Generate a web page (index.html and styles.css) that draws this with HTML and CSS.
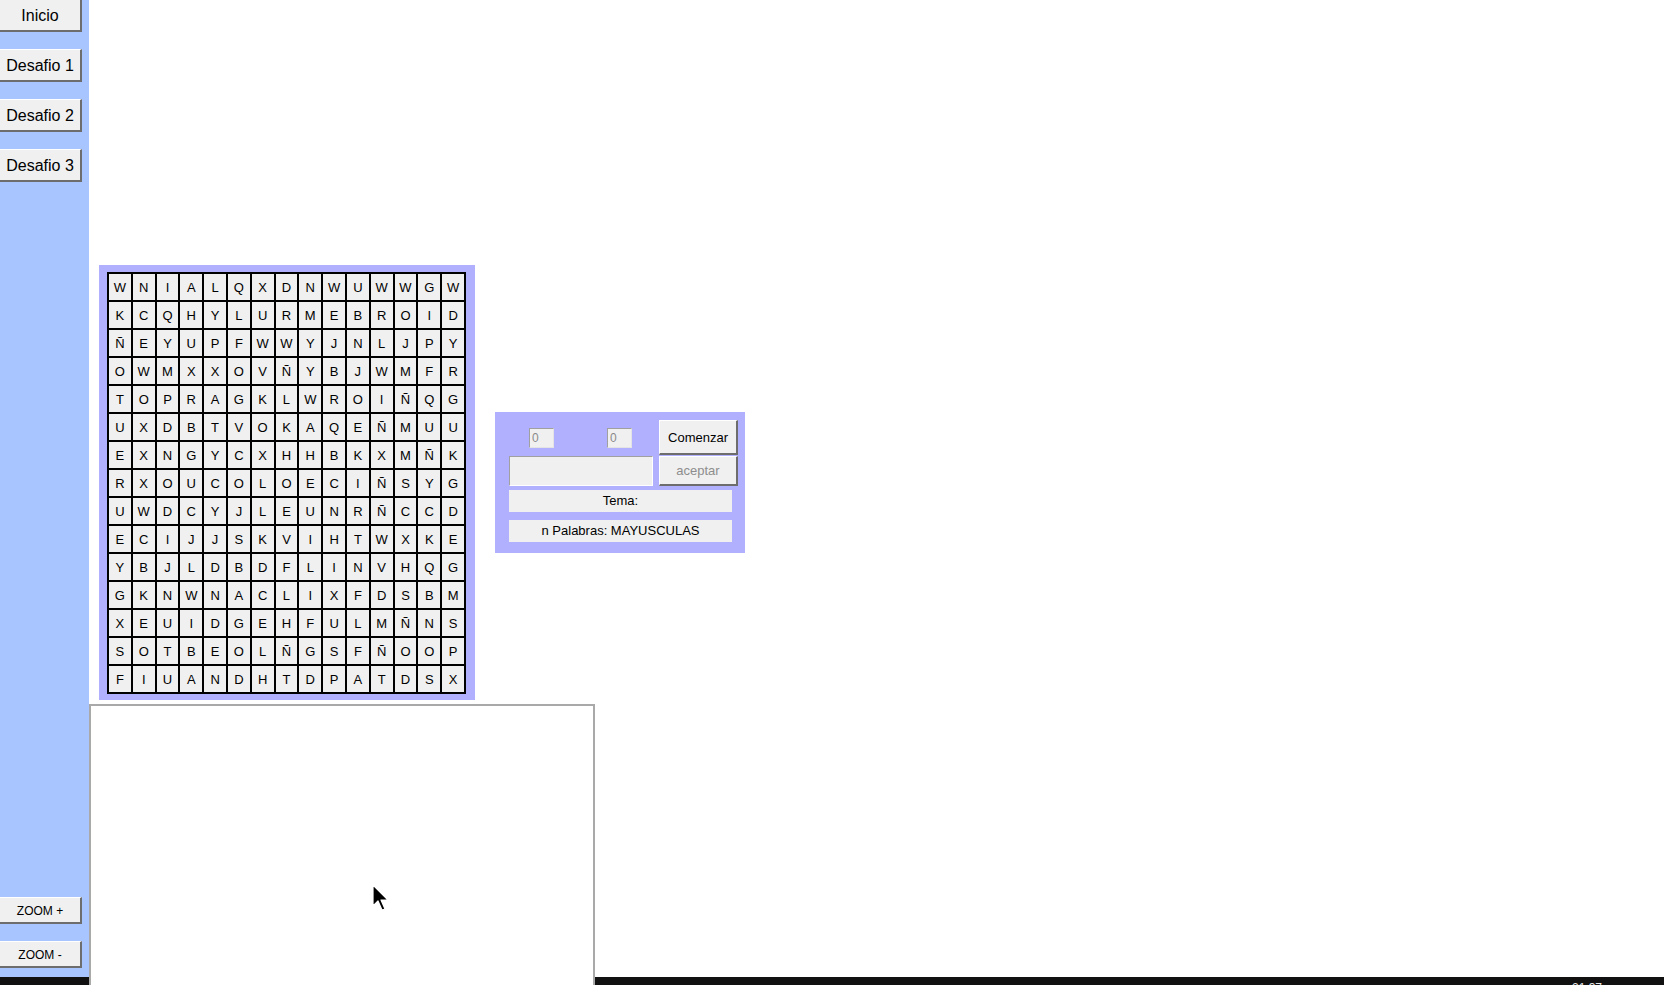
FILE: index.html
```html
<!DOCTYPE html>
<html lang="es">
<head>
<meta charset="utf-8">
<title>Sopa de letras</title>
<link rel="stylesheet" href="styles.css">
</head>
<body>
<div class="app">
  <nav class="sidebar">
    <div class="nav-top">
      <button class="nav-btn first">Inicio</button>
      <button class="nav-btn">Desafio 1</button>
      <button class="nav-btn">Desafio 2</button>
      <button class="nav-btn">Desafio 3</button>
    </div>
    <div class="nav-bottom">
      <button class="zoom-btn">ZOOM +</button>
      <button class="zoom-btn">ZOOM -</button>
    </div>
  </nav>
  <main class="main">
    <div class="row">
      <div class="board">
        <table class="grid">
          <tr><td>W</td><td>N</td><td>I</td><td>A</td><td>L</td><td>Q</td><td>X</td><td>D</td><td>N</td><td>W</td><td>U</td><td>W</td><td>W</td><td>G</td><td>W</td></tr>
          <tr><td>K</td><td>C</td><td>Q</td><td>H</td><td>Y</td><td>L</td><td>U</td><td>R</td><td>M</td><td>E</td><td>B</td><td>R</td><td>O</td><td>I</td><td>D</td></tr>
          <tr><td>Ñ</td><td>E</td><td>Y</td><td>U</td><td>P</td><td>F</td><td>W</td><td>W</td><td>Y</td><td>J</td><td>N</td><td>L</td><td>J</td><td>P</td><td>Y</td></tr>
          <tr><td>O</td><td>W</td><td>M</td><td>X</td><td>X</td><td>O</td><td>V</td><td>Ñ</td><td>Y</td><td>B</td><td>J</td><td>W</td><td>M</td><td>F</td><td>R</td></tr>
          <tr><td>T</td><td>O</td><td>P</td><td>R</td><td>A</td><td>G</td><td>K</td><td>L</td><td>W</td><td>R</td><td>O</td><td>I</td><td>Ñ</td><td>Q</td><td>G</td></tr>
          <tr><td>U</td><td>X</td><td>D</td><td>B</td><td>T</td><td>V</td><td>O</td><td>K</td><td>A</td><td>Q</td><td>E</td><td>Ñ</td><td>M</td><td>U</td><td>U</td></tr>
          <tr><td>E</td><td>X</td><td>N</td><td>G</td><td>Y</td><td>C</td><td>X</td><td>H</td><td>H</td><td>B</td><td>K</td><td>X</td><td>M</td><td>Ñ</td><td>K</td></tr>
          <tr><td>R</td><td>X</td><td>O</td><td>U</td><td>C</td><td>O</td><td>L</td><td>O</td><td>E</td><td>C</td><td>I</td><td>Ñ</td><td>S</td><td>Y</td><td>G</td></tr>
          <tr><td>U</td><td>W</td><td>D</td><td>C</td><td>Y</td><td>J</td><td>L</td><td>E</td><td>U</td><td>N</td><td>R</td><td>Ñ</td><td>C</td><td>C</td><td>D</td></tr>
          <tr><td>E</td><td>C</td><td>I</td><td>J</td><td>J</td><td>S</td><td>K</td><td>V</td><td>I</td><td>H</td><td>T</td><td>W</td><td>X</td><td>K</td><td>E</td></tr>
          <tr><td>Y</td><td>B</td><td>J</td><td>L</td><td>D</td><td>B</td><td>D</td><td>F</td><td>L</td><td>I</td><td>N</td><td>V</td><td>H</td><td>Q</td><td>G</td></tr>
          <tr><td>G</td><td>K</td><td>N</td><td>W</td><td>N</td><td>A</td><td>C</td><td>L</td><td>I</td><td>X</td><td>F</td><td>D</td><td>S</td><td>B</td><td>M</td></tr>
          <tr><td>X</td><td>E</td><td>U</td><td>I</td><td>D</td><td>G</td><td>E</td><td>H</td><td>F</td><td>U</td><td>L</td><td>M</td><td>Ñ</td><td>N</td><td>S</td></tr>
          <tr><td>S</td><td>O</td><td>T</td><td>B</td><td>E</td><td>O</td><td>L</td><td>Ñ</td><td>G</td><td>S</td><td>F</td><td>Ñ</td><td>O</td><td>O</td><td>P</td></tr>
          <tr><td>F</td><td>I</td><td>U</td><td>A</td><td>N</td><td>D</td><td>H</td><td>T</td><td>D</td><td>P</td><td>A</td><td>T</td><td>D</td><td>S</td><td>X</td></tr>
        </table>
      </div>
      <div class="controls">
        <div class="ctrl-grid">
          <div class="coords">
            <input class="coord" type="text" value="0" readonly>
            <input class="coord" type="text" value="0" readonly>
          </div>
          <button class="ctrl-btn">Comenzar</button>
          <input class="word-input" type="text">
          <button class="ctrl-btn disabled">aceptar</button>
        </div>
        <div class="label">Tema:</div>
        <div class="label second">n Palabras: MAYUSCULAS</div>
      </div>
    </div>
    <div class="canvas-box"></div>
  </main>
</div>
<div class="taskbar"><span class="clock">21:37</span></div>
<svg class="cursor" width="18" height="28" viewBox="0 0 18 28">
  <path d="M1 1 L1 22 L6 17 L10 26 L13 25 L9 16 L16 16 Z" fill="#000" stroke="#fff" stroke-width="1.2" stroke-linejoin="round"/>
</svg>
</body>
</html>
```

FILE: styles.css
```css
html, body {
  margin: 0;
  padding: 0;
  background: #ffffff;
  font-family: "Liberation Sans", Arial, sans-serif;
  overflow: hidden;
}

.app {
  display: flex;
  height: 985px;
  overflow: hidden;
}

.sidebar {
  width: 89px;
  flex: 0 0 89px;
  background: #a9c5ff;
  display: flex;
  flex-direction: column;
  justify-content: space-between;
  padding-bottom: 17px;
  box-sizing: border-box;
}

.nav-top {
  display: flex;
  flex-direction: column;
  gap: 17px;
  margin-top: -1px;
}

.nav-btn,
.zoom-btn {
  width: 82px;
  background: #f0f0f0;
  border-style: solid;
  border-width: 1px 2px 2px 0;
  border-color: #ffffff #6d6d6d #6d6d6d #ffffff;
  color: #000;
  font-family: "Liberation Sans", Arial, sans-serif;
  padding: 0;
  cursor: pointer;
}

.nav-btn {
  height: 33px;
  font-size: 16px;
  padding-top: 2px;
}

.nav-bottom {
  display: flex;
  flex-direction: column;
  gap: 17px;
}

.zoom-btn {
  height: 27px;
  font-size: 12px;
  padding-top: 1px;
}

.main {
  flex: 1;
  display: flex;
  flex-direction: column;
  padding-top: 265px;
  min-width: 0;
}

.row {
  display: flex;
  align-items: flex-start;
  margin-left: 10px;
  gap: 20px;
}

.board {
  background: #b0b0ff;
  padding: 7px 9px 6px 8px;
}

.grid {
  border-collapse: separate;
  border-spacing: 0;
  border: 1px solid #000;
  table-layout: fixed;
  width: 359px;
}

.grid td {
  border: 1px solid #000;
  background: #f0f0f0;
  height: 26px;
  padding: 0;
  text-align: center;
  font-size: 13px;
  color: #000;
}

.controls {
  margin-top: 147px;
  width: 250px;
  box-sizing: border-box;
  background: #b0b0ff;
  padding: 8px 7px 11px 14px;
}

.ctrl-grid {
  display: grid;
  grid-template-columns: 144px 79px;
  grid-template-rows: 35px 30px;
  column-gap: 6px;
  row-gap: 1px;
}

.coords {
  display: flex;
  align-items: center;
  gap: 53px;
  padding-left: 20px;
  padding-top: 1px;
}

.coord {
  width: 25px;
  height: 20px;
  box-sizing: border-box;
  border-style: solid;
  border-width: 1px;
  border-color: #a0a0a0 #e4e4e4 #e4e4e4 #a0a0a0;
  background: #f0f0f0;
  color: #8a8a8a;
  font-family: "Liberation Sans", Arial, sans-serif;
  font-size: 12px;
  padding: 0 2px;
  outline: none;
}

.ctrl-btn {
  background: #f0f0f0;
  border-style: solid;
  border-width: 1px 2px 2px 1px;
  border-color: #ffffff #6d6d6d #6d6d6d #ffffff;
  font-family: "Liberation Sans", Arial, sans-serif;
  font-size: 13px;
  color: #000;
  padding: 0;
}

.ctrl-btn.disabled {
  color: #8d8d8d;
}

.word-input {
  box-sizing: border-box;
  width: 144px;
  height: 30px;
  border-style: solid;
  border-width: 1px;
  border-color: #a0a0a0 #ffffff #ffffff #a0a0a0;
  background: #f0f0f0;
  outline: none;
  padding: 0 3px;
  font-family: "Liberation Sans", Arial, sans-serif;
}

.label {
  width: 223px;
  height: 22px;
  margin-top: 4px;
  background: #f0f0f0;
  font-size: 13px;
  line-height: 22px;
  text-align: center;
  color: #000;
}

.label.first-label {
  padding-right: 6px;
}

.label.second {
  margin-top: 8px;
}

.canvas-box {
  position: relative;
  z-index: 2;
  margin-top: 4px;
  width: 506px;
  height: 300px;
  flex: 0 0 auto;
  box-sizing: border-box;
  border: 2px solid #a9a9a9;
  background: #ffffff;
}

.taskbar {
  position: fixed;
  left: 0;
  right: 0;
  bottom: 0;
  height: 8px;
  background: #111111;
  z-index: 1;
  overflow: hidden;
  display: flex;
  justify-content: flex-end;
}

.clock {
  color: #e8e8e8;
  font-size: 12px;
  line-height: 12px;
  padding-top: 5px;
  padding-right: 62px;
  font-family: "Liberation Sans", Arial, sans-serif;
}

.cursor {
  position: fixed;
  left: 372px;
  top: 884px;
  z-index: 5;
}
```
